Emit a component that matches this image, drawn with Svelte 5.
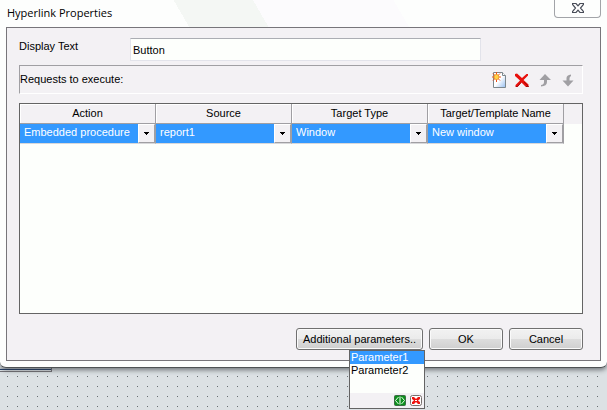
<script>
  let displayText = $state('Button');
  let selected = $state('Parameter1');
  const parameters = ['Parameter1', 'Parameter2'];
  const columns = ['Action', 'Source', 'Target Type', 'Target/Template Name'];
  const row = ['Embedded procedure', 'report1', 'Window', 'New window'];
</script>

<div class="desktop">
  <div class="dialog" role="dialog" aria-labelledby="dialog-title">
    <header class="titlebar">
      <span id="dialog-title" class="title">Hyperlink Properties</span>
      <button class="close" aria-label="Close">
        <svg width="12" height="10" viewBox="0 0 12 10">
          <path d="M.5 .5H4L6 2.800L8 .5H11.500V1.500L8.500 5L11.500 8.500V9.500H8L6 7.200L4 9.500H.5V8.500L3.500 5L.5 1.500Z" fill="#fff" stroke="#484d58" stroke-width="1.200" />
        </svg>
      </button>
    </header>

    <main class="panel">
      <div class="field">
        <label for="display-text">Display Text</label>
        <input id="display-text" type="text" bind:value={displayText} />
      </div>

      <div class="toolbar">
        <span class="caption">Requests to execute:</span>
        <button class="tool" aria-label="New request">
          <svg width="16" height="16" viewBox="0 0 16 16">
            <defs>
              <linearGradient id="page" x1="0" y1="0" x2="1" y2="1">
                <stop offset="0.5" stop-color="#fff" />
                <stop offset="1" stop-color="#94bcf0" />
              </linearGradient>
            </defs>
            <path d="M2.500 .5H11.500L14.500 3.500V15.500H2.500Z" fill="url(#page)" stroke="#7c868c" />
            <path d="M11.500 .5V3.500H14.500" fill="#fff" stroke="#7c868c" />
            <path d="M5.500 0V10M1 5H10M2 1.500L9 8.500M9 1.500L2 8.500" stroke="#e8501c" stroke-width="1" />
            <circle cx="5.500" cy="5" r="2.500" fill="#ffd34a" stroke="#f59a28" />
          </svg>
        </button>
        <button class="tool" aria-label="Delete request">
          <svg width="16" height="16" viewBox="0 0 16 16">
            <path d="M1 2L3 1.500L8 6L12.500 2H14V3.500L9.500 8L14.500 12.500V15H12L7.500 10.500L3.500 15H1.500V13L6 8.500L1 4Z" fill="#e8100c" />
            <path d="M10 10L14.500 14.500H12M2 14.500H3.500L7 10.500" fill="none" stroke="#a80808" />
          </svg>
        </button>
        <button class="tool" aria-label="Move up" disabled>
          <svg width="16" height="16" viewBox="0 0 16 16">
            <path d="M8 2L14 8H10V10Q10 14 4 14.500V13Q7 12.500 7 10V8H2.500Z" fill="#a09fa3" />
          </svg>
        </button>
        <button class="tool" aria-label="Move down" disabled>
          <svg width="16" height="16" viewBox="0 0 16 16">
            <path d="M8 14.500L2.500 8.500H6.500V6Q6.500 3 11 2.500V4Q9.500 4.500 9.500 6.500V8.500H13.500Z" fill="#a09fa3" />
          </svg>
        </button>
      </div>

      <div class="grid">
        <table>
          <thead>
            <tr>
              {#each columns as column}
                <th scope="col">{column}</th>
              {/each}
              <th class="rest" aria-hidden="true"></th>
            </tr>
          </thead>
          <tbody>
            <tr>
              {#each row as value, i}
                <td>
                  <div class="combo">
                    <select aria-label={columns[i]}>
                      <option>{value}</option>
                    </select>
                    <span class="drop" aria-hidden="true">
                      <svg width="5" height="3" viewBox="0 0 5 3" shape-rendering="crispEdges">
                        <path d="M0 0H5V1H4V2H3V3H2V2H1V1H0Z" />
                      </svg>
                    </span>
                  </div>
                </td>
              {/each}
              <td class="rest"></td>
            </tr>
          </tbody>
        </table>
      </div>

      <footer class="actions">
        <div class="anchor">
          <button class="push wide">Additional parameters..</button>
          <div class="popup">
            <div class="list" role="listbox" aria-label="Parameters">
              {#each parameters as name}
                <button
                  class="option"
                  class:active={selected === name}
                  role="option"
                  aria-selected={selected === name}
                  onclick={() => (selected = name)}>{name}</button>
              {/each}
            </div>
            <div class="popup-bar">
              <button class="mini" aria-label="Add parameter">
                <svg width="12" height="11" viewBox="0 0 12 11">
                  <rect x=".5" y=".5" width="11" height="10" rx="1" fill="#0c8f1c" stroke="#3c6a44" />
                  <path d="M4.500 2L1.500 5.500L4.500 9M7.500 2L10.500 5.500L7.500 9" fill="none" stroke="#e8ffe8" />
                  <path d="M6 1.500V9.500" stroke="#fff" />
                </svg>
              </button>
              <button class="mini" aria-label="Remove parameter">
                <svg width="12" height="11" viewBox="0 0 12 11">
                  <rect x=".5" y=".5" width="11" height="10" rx="2" fill="#fff" stroke="#77706e" />
                  <path d="M2 2H4L6 4L8 2H10V4L8 5.500L10 7V9H8L6 7L4 9H2V7L4 5.500L2 4Z" fill="#ee1510" />
                  <rect x="5" y="5" width="2" height="1" fill="#fff" />
                </svg>
              </button>
            </div>
          </div>
        </div>
        <button class="push">OK</button>
        <button class="push">Cancel</button>
      </footer>
    </main>
  </div>
  <div class="behind"></div>
</div>

<style>
  :global(body) {
    background: #dce1e4;
  }
  .desktop {
    min-height: 100vh;
    box-sizing: border-box;
    overflow: hidden;
    background: conic-gradient(from 270deg at 1px 1px, #686e72 90deg, transparent 0) 7px 6px / 10px 10px #dce1e4;
    font-family: "Liberation Sans", Arial, sans-serif;
    font-size: 11px;
    line-height: 13px;
    color: #000;
  }
  button,
  input,
  select {
    font: inherit;
    color: inherit;
    margin: 0;
    box-sizing: border-box;
  }
  button {
    padding: 0;
  }
  svg {
    display: block;
  }
  .dialog {
    position: relative;
    z-index: 1;
    padding: 0 6px 6px;
    border-bottom: 1px solid #4e5254;
    border-radius: 0 0 6px 6px;
    background: #fdfefd;
    box-shadow: 0 2px 5px rgba(40, 45, 50, 0.6);
  }
  .titlebar {
    display: flex;
    justify-content: space-between;
    align-items: flex-start;
    height: 27px;
    background: linear-gradient(60deg, transparent 30%, #f4f7f4 30% 43%, #fcfbfd 43% 66%, transparent 66%);
  }
  .title {
    padding: 5px 1px;
    font-family: "Open Sans", "Noto Sans", sans-serif;
    font-size: 11px;
    line-height: 16px;
  }
  .close {
    display: flex;
    justify-content: center;
    align-items: center;
    width: 47px;
    height: 18px;
    padding-bottom: 1px;
    border: 1px solid #a2a4a8;
    border-top: 0;
    border-radius: 0 0 4px 4px;
    background: #fdfefd;
  }
  .panel {
    display: flex;
    flex-direction: column;
    padding: 10px 17px 10px 12px;
    border: 1px solid #77757a;
    background: #f3f1f4;
  }
  .field {
    display: flex;
    align-items: flex-start;
  }
  .field label {
    width: 111px;
    padding-top: 2px;
    box-sizing: border-box;
  }
  .field input {
    flex: 1;
    max-width: 351px;
    height: 23px;
    padding: 0 2px;
    border: 1px solid #e2e3ea;
    border-top-color: #abadb3;
    background: #fdfffc;
  }
  .toolbar {
    display: flex;
    align-items: center;
    gap: 7px;
    height: 29px;
    margin-top: 4px;
    padding-right: 6px;
    box-sizing: border-box;
    border: 1px solid #a09fa3;
    border-right-color: #fff;
    border-bottom-color: #fff;
  }
  .caption {
    flex: 1;
  }
  .tool {
    width: 16px;
    height: 16px;
    border: 0;
    background: none;
  }
  .grid {
    height: 209px;
    margin-top: 9px;
    border: 1px solid #646464;
    background: #fdfffc;
  }
  table {
    width: 100%;
    table-layout: fixed;
    border-collapse: separate;
    border-spacing: 0;
  }
  th,
  td {
    width: 136px;
    padding: 0;
    box-sizing: border-box;
  }
  th.rest,
  td.rest {
    width: auto;
    border-right: 0;
  }
  th {
    height: 20px;
    border-right: 1px solid #a09fa3;
    border-bottom: 1px solid #a09fa3;
    background: #f3f1f4;
    box-shadow: inset 1px 1px #fff;
    font-weight: 400;
    text-align: center;
  }
  th.rest {
    border-bottom: 0;
    box-shadow: none;
  }
  .combo {
    display: flex;
    height: 20px;
    box-sizing: border-box;
    border-right: 1px solid #a09fa3;
    border-bottom: 1px solid #d8d8da;
    background: #3399ff;
  }
  .combo select {
    flex: 1;
    min-width: 0;
    padding: 0 0 3px 4px;
    appearance: none;
    border: 0;
    border-radius: 0;
    background: #3399ff;
    color: #fff;
  }
  .drop {
    display: flex;
    justify-content: center;
    align-items: center;
    width: 17px;
    box-sizing: border-box;
    border: 1px solid #fff;
    border-right-color: #a09fa3;
    border-bottom-color: #a09fa3;
    background: #f3f1f4;
    pointer-events: none;
  }
  .actions {
    display: flex;
    justify-content: flex-end;
    gap: 6px;
    margin-top: 14px;
  }
  .anchor {
    position: relative;
  }
  .push {
    width: 74px;
    height: 22px;
    border: 1px solid #707070;
    border-radius: 3px;
    background: linear-gradient(#f2f2f2, #ebebeb 50%, #dddddd 50%, #cfcfcf);
    box-shadow: inset 0 0 0 1px #fafafa;
  }
  .wide {
    width: 127px;
  }
  .popup {
    position: absolute;
    top: 22px;
    left: 53px;
    width: 76px;
    box-sizing: border-box;
    border: 1px solid #646464;
    background: #fdfffc;
  }
  .list {
    height: 42px;
  }
  .option {
    display: block;
    width: 100%;
    height: 13px;
    padding-left: 1px;
    border: 0;
    background: none;
    text-align: left;
  }
  .option.active {
    background: #3399ff;
    color: #fff;
  }
  .popup-bar {
    display: flex;
    justify-content: flex-end;
    align-items: center;
    gap: 4px;
    height: 15px;
    padding-right: 2px;
    background: #f3f1f4;
  }
  .mini {
    border: 0;
    background: none;
  }
  .behind {
    width: 52px;
    height: 4px;
    box-sizing: border-box;
    border-right: 1px solid #77757a;
    border-bottom: 1px solid #77757a;
    background: linear-gradient(#c8d0d8 1px, #24406c 1px 2px, #e4e8ec 2px);
  }
</style>
